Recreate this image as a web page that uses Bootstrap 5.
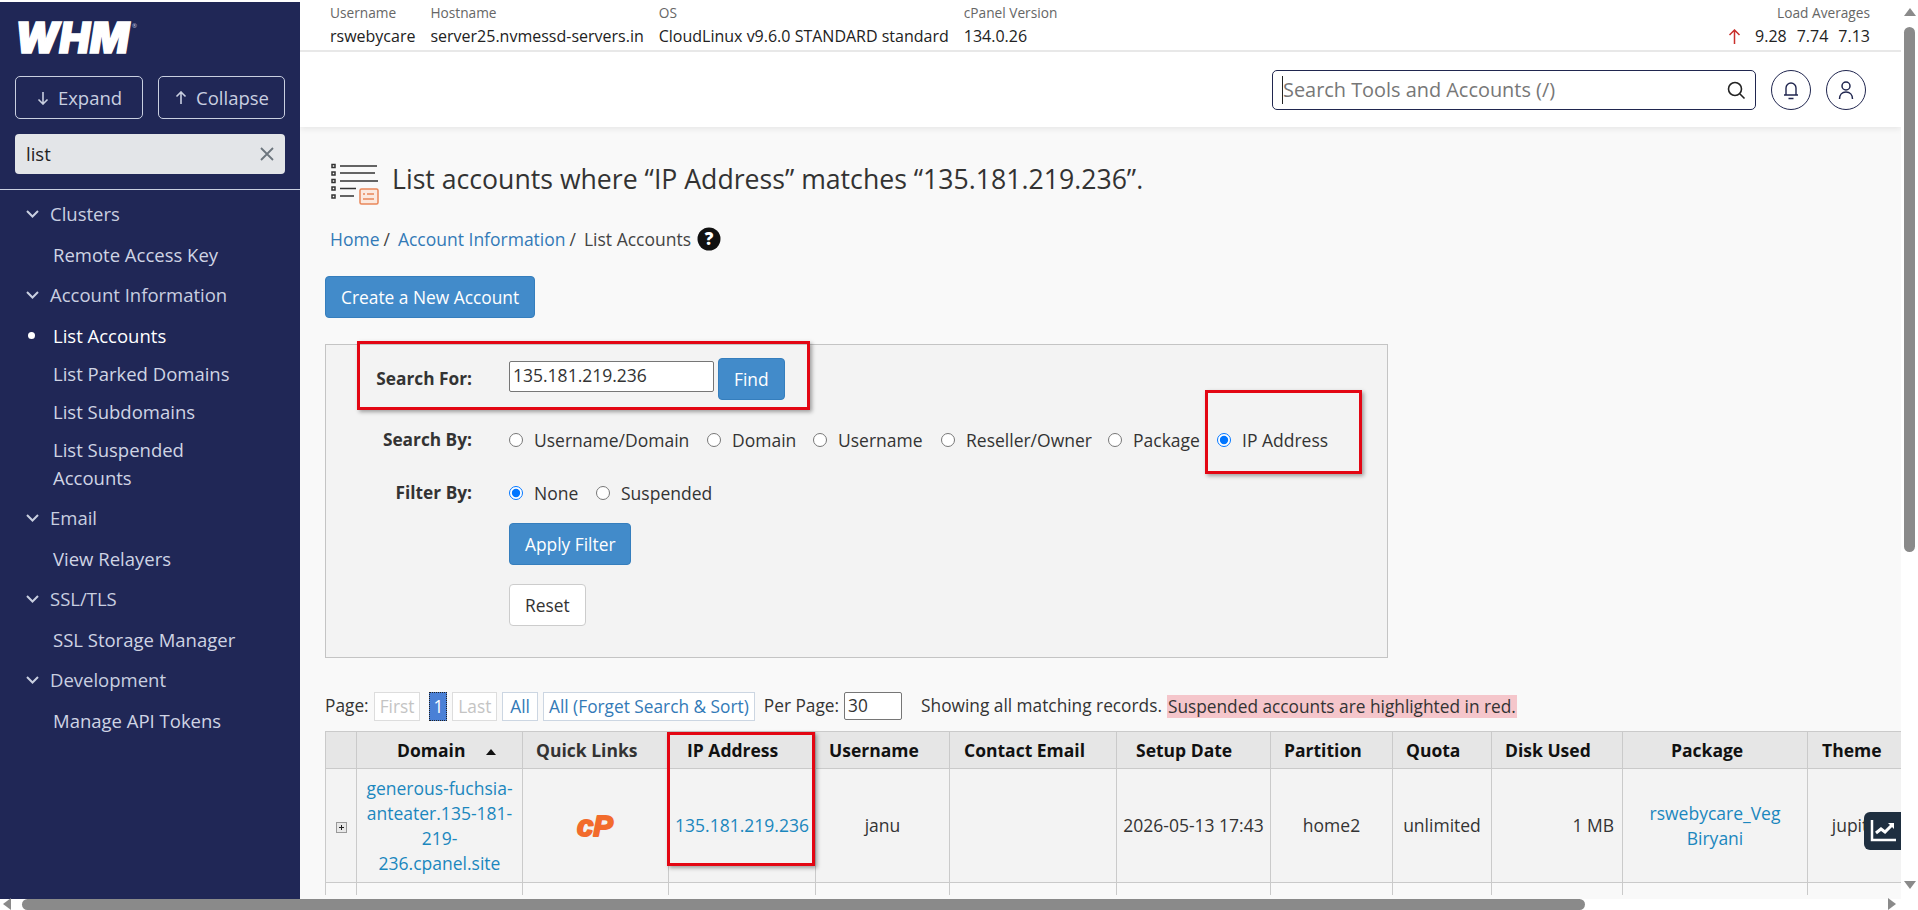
<!DOCTYPE html>
<html lang="en">
<head>
<meta charset="UTF-8">
<title>WHM - List Accounts</title>
<link rel="stylesheet" href="https://cdn.jsdelivr.net/npm/bootstrap@5.3.0/dist/css/bootstrap.min.css">
<style>
    html, body { height: 100%; overflow: hidden; }
    body { font-family: "Open Sans", sans-serif; font-size: 16px; color: #333; background: #fff; }
    a { text-decoration: none; }
    .shell { height: 910px; }
    .shell-top { height: 899px; min-height: 0; padding-top: 2px; }

    /* sidebar */
    .side { width: 300px; flex: none; background: #202756; color: #c9cfe0; }
    .side-logo { height: 74px; padding: 15px 0 0 13px; }
    .side-btn { width: 128px; height: 43px; border: 1px solid #c9cfe0; border-radius: 5px; color: #c9cfe0; background: transparent; font-size: 18.500px; }
    .side-btn + .side-btn { width: 127px; }
    .side-search { height: 40px; margin: 15px 15px 15px; background: #e3e5e8; border-radius: 4px; padding: 0 11px; color: #222; font-size: 18.500px; }
    .side-rule { border-top: 1px solid #c9cfe0; }
    .side-sec { height: 40px; margin-bottom: 2px; padding-left: 26px; font-size: 18.500px; gap: 11px; }
    .side-sub + .side-sec { margin-top: 1px; }
    .side-sub { padding: 5px 50px 5px 53px; font-size: 18.500px; line-height: 28px; color: #cfd4e4; position: relative; }
    .side-sub.on { color: #fff; }
    .side-dot { position: absolute; left: 28px; top: 15px; width: 7px; height: 7px; border-radius: 50%; background: #fff; }

    /* header */
    .main { min-width: 0; background: #f9f9f9; }
    .hdr { background: #fff; border-top: 1px solid #e4e4e4; margin-top: -1px; box-shadow: 0 2px 6px rgba(0,0,0,.08); position: relative; }
    .hdr-status { height: 50px; border-bottom: 2px solid #e8e8e8; padding: 0 31px 0 30px; gap: 15px; }
    .hdr-lbl { font-size: 13.700px; color: #666; line-height: 22px; }
    .hdr-val { font-size: 16px; color: #222; line-height: 24px; }
    .hdr-tools { height: 75px; padding: 18px 35px 0 0; gap: 15px; }
    .hdr-search { width: 484px; height: 40px; border: 1px solid #20264f; border-radius: 5px; padding: 0 9px; font-size: 19.900px; color: #777; }
    .hdr-caret { width: 1px; height: 28px; background: #222; }
    .hdr-circle { width: 40px; height: 40px; border: 1px solid #20264f; border-radius: 50%; }

    /* content */
    .body-pad { padding: 37px 0 0 25px; position: relative; height: 100%; }
    .pg-title { font-size: 26.650px; color: #333; font-weight: 400; margin: 0; line-height: 30px; padding-left: 6px; gap: 12px; height: 40px; }
    .pg-title span { padding-bottom: 11px; }
    .crumbs { margin: 22px 0 0 5px; line-height: 26px; font-size: 17.500px; color: #444; }
    .crumbs a, .link-blue { color: #337ab7; }
    .crumbs svg { margin-left: 6px; }
    .btn-blue { background: #428bca; border: 1px solid #357ebd; color: #fff; font-size: 17.350px; border-radius: 4px; padding: 0 15px; height: 42px; }
    .btn-blue:hover { background: #428bca; color: #fff; }
    .btn-plain { background: #fff; border: 1px solid #ccc; color: #333; font-size: 17.350px; border-radius: 4px; padding: 0 15px; height: 42px; }
    .new-btn { margin-top: 24px; }

    .fbox { width: 1063px; height: 314px; margin-top: 26px; background: #f3f3f3; border: 1px solid #c4c4c4; padding-top: 13px; }
    .frow-lbl { width: 146px; flex: none; text-align: right; font-weight: 700; margin-right: 37px; font-size: 17.300px; }
    .frow { font-size: 17.500px; }
    .fip { width: 205px; height: 31px; margin-top: -6px; border: 1px solid #767676; border-radius: 2px; background: #fff; padding: 0 3px; color: #333; font-size: 17.500px; line-height: 27px; }
    .frad label { display: inline-flex; align-items: center; }
    .frad input { width: 14px; height: 14px; margin: 0 11px 0 0; accent-color: #0075ff; }

    /* pager */
    .pager { margin-top: 33px; height: 30px; gap: 5px; font-size: 17.300px; }
    .pager-btn { height: 29px; border: 1px solid #ccd6e2; background: #fff; color: #337ab7; padding: 0 5px; line-height: 27px; }
    .pager-btn.off { color: #c4c4c4; border-color: #ddd; }
    .pager-btn.cur { background: #4a80d6; color: #fff; border: 1px dotted #222; padding: 0 3px; }
    .pager-btn.wide { padding: 0 7px; }
    .pager-num { width: 58px; height: 28px; border: 1px solid #767676; border-radius: 2px; background: #fff; padding: 0 3px; line-height: 26px; color: #333; }
    .pager-red { background: #f5c6cb; padding: 0 1px; line-height: 23px; }

    /* table */
    .tbl-clip { position: absolute; left: 25px; right: 0; top: 604px; height: 164px; overflow: hidden; }
    .tbl { table-layout: fixed; border-collapse: collapse; width: 1584px; margin: 0; font-size: 17.500px; }
    .tbl th, .tbl td { border: 1px solid #cacaca; text-align: center; vertical-align: middle; padding: 6px 3px; line-height: 25px; background: #f3f3f3; font-weight: 400; color: #333; }
    .tbl th { background: #e6e6e6; font-weight: 700; color: #111; height: 37px; padding: 0 0 0 13px; text-align: left; white-space: nowrap; }
    .tbl td a { color: #1b87be; }
    .tbl td.cell-domain { padding: 6px 8px; }
    .tbl tr.r1 td { height: 114px; }
    .tbl tr.r2 td { height: 60px; background: #f9f9f9; }

    /* annotation boxes */
    .mark-box { position: absolute; border: 3px solid #e30613; box-shadow: 2px 2px 4px rgba(0,0,0,.35); pointer-events: none; }
    .mark-a { left: 57px; top: 214px; width: 453px; height: 69px; }
    .mark-b { left: 905px; top: 263px; width: 157px; height: 84px; }
    .mark-c { left: 367px; top: 605px; width: 148px; height: 134px; }

    .chart-fab { position: absolute; right: 0; top: 685px; width: 37px; height: 38px; background: #1f2f40; border-radius: 6px 0 0 6px; }

    /* scrollbars */
    .vbar { width: 17px; flex: none; background: #fff; }
    .vbar-thumb { width: 11px; height: 525px; background: #8a8a8a; border-radius: 6px; margin: 25px 0 0 3px; }
    .hbar { height: 11px; background: #fff; padding: 0 8px; }
    .hbar-thumb { width: 1563px; height: 11px; background: #8a8a8a; border-radius: 6px; margin-left: 14px; }
    .tri { width: 0; height: 0; border-style: solid; border-color: transparent; position: absolute; }
    .tri-up { right: 2px; top: 8px; border-width: 0 6px 8px; border-bottom-color: #8a8a8a; }
    .tri-down { right: 2px; top: 881px; border-width: 8px 6px 0; border-top-color: #8a8a8a; }
    .tri-left { left: 3px; bottom: 0; border-width: 6px 8px 6px 0; border-right-color: #8a8a8a; }
    .tri-right { right: 22px; bottom: 0; border-width: 6px 0 6px 8px; border-left-color: #8a8a8a; }
</style>
</head>
<body>
<div class="shell d-flex flex-column position-relative">
    <div class="shell-top d-flex flex-grow-1">
        <aside class="side">
            <div class="side-logo">
                <svg width="160" height="42" viewBox="0 0 160 42" role="img" aria-label="WHM">
                    <text x="2" y="36" font-family="Inter, sans-serif" font-weight="900" font-style="italic" font-size="43" fill="#fff" stroke="#fff" stroke-width="1.500" textLength="114" lengthAdjust="spacingAndGlyphs">WHM</text>
                    <text x="119" y="11" font-family="Open Sans, sans-serif" font-size="6" fill="#c9cfe0">®</text>
                </svg>
            </div>
            <div class="d-flex justify-content-between" style="padding:0 15px">
                <button class="btn side-btn d-flex align-items-center justify-content-center gap-2 p-0">
                    <svg width="14" height="14" viewBox="0 0 14 14" fill="none" stroke="currentColor" stroke-width="1.6"><path d="M7 1v12M2.5 8.5 7 13l4.500-4.500"/></svg>Expand</button>
                <button class="btn side-btn d-flex align-items-center justify-content-center gap-2 p-0">
                    <svg width="14" height="14" viewBox="0 0 14 14" fill="none" stroke="currentColor" stroke-width="1.6"><path d="M7 13V1M2.500 5.500 7 1l4.500 4.500"/></svg>Collapse</button>
            </div>
            <div class="side-search d-flex align-items-center justify-content-between">
                <span>list</span>
                <svg width="14" height="14" viewBox="0 0 14 14" stroke="#6c757d" stroke-width="1.8"><path d="M1 1l12 12M13 1 1 13"/></svg>
            </div>
            <div class="side-rule mb-1"></div>
            <nav id="sideNav"></nav>
        </aside>

        <div class="main flex-grow-1 d-flex flex-column overflow-hidden position-relative">
            <header class="hdr">
                <div class="hdr-status d-flex">
                    <div><div class="hdr-lbl">Username</div><div class="hdr-val">rswebycare</div></div>
                    <div><div class="hdr-lbl">Hostname</div><div class="hdr-val">server25.nvmessd-servers.in</div></div>
                    <div><div class="hdr-lbl">OS</div><div class="hdr-val">CloudLinux v9.6.0 STANDARD standard</div></div>
                    <div><div class="hdr-lbl">cPanel Version</div><div class="hdr-val">134.0.26</div></div>
                    <div class="ms-auto text-end">
                        <div class="hdr-lbl">Load Averages</div>
                        <div class="hdr-val d-flex align-items-center justify-content-end" style="gap:10px">
                            <svg class="me-1" width="13" height="15" viewBox="0 0 13 15" fill="none" stroke="#c9302c" stroke-width="1.5"><path d="M6.500 15V1M1.500 6l5-5 5 5"/></svg>
                            <span>9.28</span><span>7.74</span><span>7.13</span>
                        </div>
                    </div>
                </div>
                <div class="hdr-tools d-flex justify-content-end">
                    <div class="hdr-search d-flex align-items-center">
                        <span class="hdr-caret"></span><span class="flex-grow-1">Search Tools and Accounts (/)</span>
                        <svg width="20" height="20" viewBox="0 0 20 20" fill="none" stroke="#222" stroke-width="1.6"><circle cx="9" cy="9" r="6.500"/><path d="m14 14 4.500 4.500"/></svg>
                    </div>
                    <div class="hdr-circle d-flex align-items-center justify-content-center">
                        <svg width="16" height="20" viewBox="0 0 16 20" fill="none" stroke="#20264f" stroke-width="1.400"><path d="M1 15h14M3 15V8a5 5 0 0 1 10 0v7M5.500 18.500h5"/></svg>
                    </div>
                    <div class="hdr-circle d-flex align-items-center justify-content-center">
                        <svg width="16" height="20" viewBox="0 0 16 20" fill="none" stroke="#20264f" stroke-width="1.500"><circle cx="8" cy="6" r="4"/><path d="M1.500 19c0-4 2.500-7 6.500-7s6.500 3 6.500 7"/></svg>
                    </div>
                </div>
            </header>

            <div class="body-pad flex-grow-1">
                <h1 class="pg-title d-flex align-items-center">
                    <svg width="49" height="42" viewBox="0 0 49 42" fill="none">
                        <g stroke="#333" stroke-width="1.500"><rect x="1" y="1.500" width="3" height="3"/><rect x="1" y="9" width="3" height="3"/><rect x="1" y="16.500" width="3" height="3"/><rect x="1" y="24" width="3" height="3"/><rect x="1" y="32" width="3" height="3"/>
                        <path d="M9 3h37M9 10h35M9 18h38M9 25.500h16M9 33h14"/></g>
                        <rect x="29" y="26" width="18" height="15" rx="1.500" fill="#fbe9df" stroke="#e9875a" stroke-width="1.500"/>
                        <path d="M32 31h2M36 31h7M32 36h11" stroke="#e9875a" stroke-width="1.400"/>
                    </svg>
                    <span>List accounts where “IP Address” matches “135.181.219.236”.</span>
                </h1>
                <div class="crumbs d-flex align-items-center">
                    <a href="#">Home</a><span class="ms-1 me-2">/</span><a href="#">Account Information</a><span class="ms-1 me-2">/</span><span>List Accounts</span>
                    <svg width="24" height="24" viewBox="0 0 24 24"><circle cx="12" cy="12" r="11.500" fill="#111"/><text x="12" y="18" text-anchor="middle" font-family="Open Sans, sans-serif" font-weight="800" font-size="17" fill="#fff">?</text></svg>
                </div>
                <button class="btn btn-blue new-btn">Create a New Account</button>

                <div class="fbox">
                    <div class="frow d-flex align-items-center" style="height:42px">
                        <div class="frow-lbl">Search For:</div>
                        <div class="fip">135.181.219.236</div>
                        <button class="btn btn-blue ms-1">Find</button>
                    </div>
                    <div class="frow d-flex align-items-center" style="margin-top:19px;height:42px">
                        <div class="frow-lbl">Search By:</div>
                        <div class="frad d-flex" id="searchBy"></div>
                    </div>
                    <div class="frow d-flex align-items-center" style="margin-top:11px;height:42px">
                        <div class="frow-lbl">Filter By:</div>
                        <div class="frad d-flex">
                            <label style="width:87px"><input type="radio" name="fb" checked>None</label>
                            <label><input type="radio" name="fb">Suspended</label>
                        </div>
                    </div>
                    <div class="d-flex flex-column align-items-start" style="margin-left:183px;margin-top:9px;gap:19px">
                        <button class="btn btn-blue">Apply Filter</button>
                        <button class="btn btn-plain">Reset</button>
                    </div>
                </div>

                <div class="pager d-flex align-items-center text-nowrap">
                    <span>Page:</span>
                    <span class="pager-btn off">First</span>
                    <span class="pager-btn cur ms-1">1</span>
                    <span class="pager-btn off">Last</span>
                    <a class="pager-btn wide" href="#">All</a>
                    <a class="pager-btn" href="#">All (Forget Search &amp; Sort)</a>
                    <span class="ms-1">Per Page:</span>
                    <span class="pager-num">30</span>
                    <span style="margin-left:14px">Showing all matching records.</span>
                    <span class="pager-red">Suspended accounts are highlighted in red.</span>
                </div>

                <div class="tbl-clip">
                    <table class="tbl">
                        <colgroup><col style="width:31px"><col style="width:166px"><col style="width:146px"><col style="width:147px"><col style="width:134px"><col style="width:167px"><col style="width:154px"><col style="width:122px"><col style="width:99px"><col style="width:131px"><col style="width:185px"><col style="width:102px"></colgroup>
                        <thead><tr>
                            <th></th>
                            <th style="padding-left:40px">Domain <svg class="ms-3" width="10" height="6" viewBox="0 0 10 6"><path d="M5 0l5 6H0z" fill="#111"/></svg></th>
                            <th style="color:#333">Quick Links</th>
                            <th style="padding-left:18px">IP Address</th>
                            <th>Username</th><th style="padding-left:14px">Contact Email</th><th style="padding-left:19px">Setup Date</th><th>Partition</th><th>Quota</th><th>Disk Used</th><th style="padding-left:48px">Package</th><th style="padding-left:14px">Theme</th>
                        </tr></thead>
                        <tbody>
                            <tr class="r1">
                                <td><svg width="11" height="11" viewBox="0 0 11 11"><rect x=".5" y=".5" width="10" height="10" fill="#e8e8e8" stroke="#999"/><path d="M3 5.500h5M5.500 3v5" stroke="#222"/></svg></td>
                                <td class="cell-domain"><a href="#">generous-fuchsia-anteater.135-181-219-236.cpanel.site</a></td>
                                <td>
                                    <svg width="40" height="30" viewBox="0 0 40 30" role="img" aria-label="cP"><text x="1" y="25" font-family="Liberation Sans, sans-serif" font-weight="700" font-style="italic" font-size="30" fill="#f26b2c" stroke="#f26b2c" stroke-width="2" stroke-linejoin="round" textLength="36" lengthAdjust="spacingAndGlyphs">cP</text></svg>
                                </td>
                                <td><a href="#">135.181.219.236</a></td>
                                <td>janu</td><td></td><td>2026-05-13 17:43</td><td>home2</td><td>unlimited</td>
                                <td class="text-end pe-2">1 MB</td>
                                <td><a href="#">rswebycare_Veg Biryani</a></td>
                                <td>jupiter</td>
                            </tr>
                            <tr class="r2"><td></td><td></td><td></td><td></td><td></td><td></td><td></td><td></td><td></td><td></td><td></td><td></td></tr>
                        </tbody>
                    </table>
                </div>

                <div class="mark-box mark-a"></div>
                <div class="mark-box mark-b"></div>
                <div class="mark-box mark-c"></div>

                <div class="chart-fab d-flex align-items-center justify-content-center">
                    <svg width="30" height="28" viewBox="0 0 30 28" fill="none" stroke="#fff"><path d="M4 3v20h24" stroke-width="2.500"/><path d="M8 16l5-4 4 3 7-7" stroke-width="3"/><path d="M20 6h6v6z" fill="#fff" stroke="none"/></svg>
                </div>
            </div>
        </div>

        <div class="vbar position-relative">
            <div class="vbar-thumb"></div>
        </div>
    </div>
    <div class="hbar"><div class="hbar-thumb"></div></div>
    <span class="tri tri-up"></span><span class="tri tri-down"></span>
    <span class="tri tri-left"></span><span class="tri tri-right"></span>
</div>

<script>
const chev = '<svg width="13" height="8" viewBox="0 0 13 8" fill="none" stroke="currentColor" stroke-width="2"><path d="M1 1l5.500 5.500L12 1"/></svg>';
const menu = [
    ['Clusters', ['Remote Access Key']],
    ['Account Information', ['*List Accounts', 'List Parked Domains', 'List Subdomains', 'List Suspended Accounts']],
    ['Email', ['View Relayers']],
    ['SSL/TLS', ['SSL Storage Manager']],
    ['Development', ['Manage API Tokens']]
];
let navHtml = '';
menu.forEach(([sec, subs]) => {
    navHtml += `<div class="side-sec d-flex align-items-center">${chev}<span>${sec}</span></div>`;
    subs.forEach(s => {
        const on = s[0] === '*';
        navHtml += `<div class="side-sub${on ? ' on' : ''}">${on ? '<span class="side-dot"></span>' : ''}${on ? s.slice(1) : s}</div>`;
    });
});
document.getElementById('sideNav').innerHTML = navHtml;

const searchBy = [['Username/Domain', 198], ['Domain', 106], ['Username', 128], ['Reseller/Owner', 167], ['Package', 109], ['IP Address', 0]];
document.getElementById('searchBy').innerHTML = searchBy.map(([t, w], i) =>
    `<label style="${w ? 'width:' + w + 'px' : ''}"><input type="radio" name="sb"${i === 5 ? ' checked' : ''}>${t}</label>`).join('');
</script>
</body>
</html>
